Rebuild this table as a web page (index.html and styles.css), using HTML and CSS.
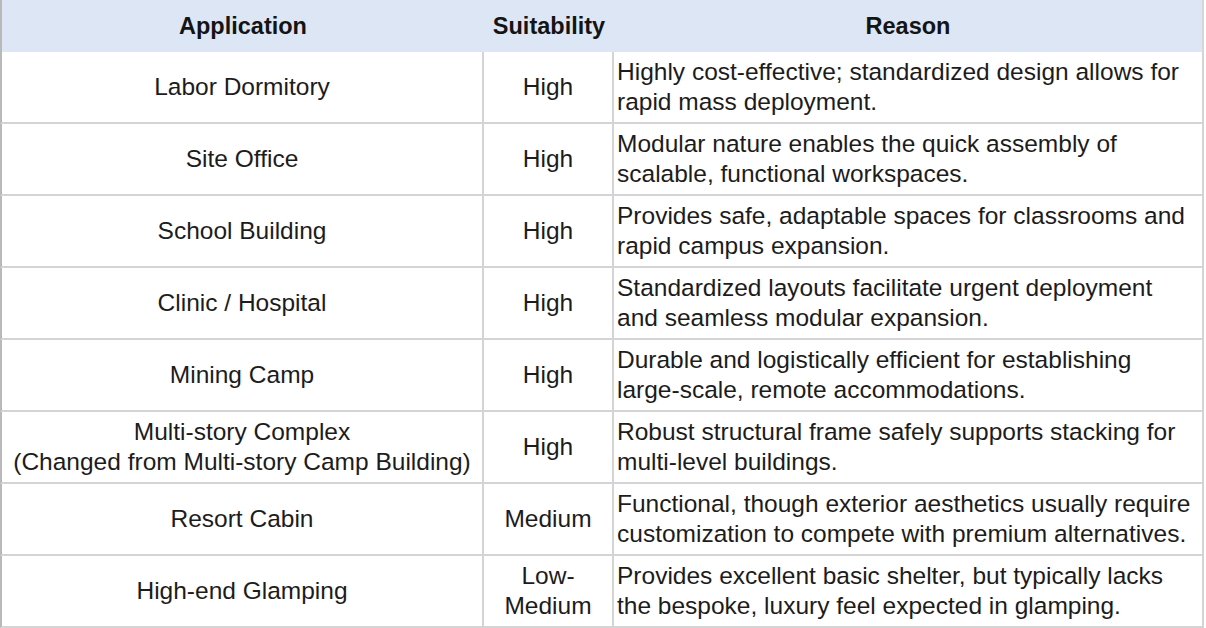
FILE: index.html
```html
<!DOCTYPE html>
<html lang="en">
<head>
<meta charset="utf-8">
<title>Applications</title>
<link rel="stylesheet" href="styles.css">
</head>
<body>
<table class="suit-table">
  <colgroup>
    <col class="col-app">
    <col class="col-suit">
    <col class="col-reason">
  </colgroup>
  <thead>
    <tr>
      <th class="h-app">Application</th>
      <th class="h-suit">Suitability</th>
      <th class="h-reason">Reason</th>
    </tr>
  </thead>
  <tbody>
    <tr>
      <td class="c-app">Labor Dormitory</td>
      <td class="c-suit">High</td>
      <td class="c-reason">Highly cost-effective; standardized design allows for<br>rapid mass deployment.</td>
    </tr>
    <tr>
      <td class="c-app">Site Office</td>
      <td class="c-suit">High</td>
      <td class="c-reason">Modular nature enables the quick assembly of<br>scalable, functional workspaces.</td>
    </tr>
    <tr>
      <td class="c-app">School Building</td>
      <td class="c-suit">High</td>
      <td class="c-reason">Provides safe, adaptable spaces for classrooms and<br>rapid campus expansion.</td>
    </tr>
    <tr>
      <td class="c-app">Clinic / Hospital</td>
      <td class="c-suit">High</td>
      <td class="c-reason">Standardized layouts facilitate urgent deployment<br>and seamless modular expansion.</td>
    </tr>
    <tr>
      <td class="c-app">Mining Camp</td>
      <td class="c-suit">High</td>
      <td class="c-reason">Durable and logistically efficient for establishing<br>large-scale, remote accommodations.</td>
    </tr>
    <tr>
      <td class="c-app">Multi-story Complex<br>(Changed from Multi-story Camp Building)</td>
      <td class="c-suit">High</td>
      <td class="c-reason">Robust structural frame safely supports stacking for<br>multi-level buildings.</td>
    </tr>
    <tr>
      <td class="c-app">Resort Cabin</td>
      <td class="c-suit">Medium</td>
      <td class="c-reason">Functional, though exterior aesthetics usually require<br>customization to compete with premium alternatives.</td>
    </tr>
    <tr>
      <td class="c-app">High-end Glamping</td>
      <td class="c-suit">Low-<br>Medium</td>
      <td class="c-reason">Provides excellent basic shelter, but typically lacks<br>the bespoke, luxury feel expected in glamping.</td>
    </tr>
  </tbody>
</table>
</body>
</html>
```
FILE: styles.css
```css
html, body {
  margin: 0;
  padding: 0;
  background: #ffffff;
}

body {
  font-family: "Liberation Sans", Arial, Helvetica, sans-serif;
  color: #1c1c1c;
}

.suit-table {
  border-collapse: separate;
  border-spacing: 0;
  table-layout: fixed;
  width: 1204px;
}

.col-app { width: 484px; }
.col-suit { width: 130px; }
.col-reason { width: 590px; }

.suit-table th {
  background: #dce6f4;
  height: 52px;
  padding: 0;
  font-size: 23.5px;
  font-weight: bold;
  color: #141414;
  text-align: center;
  vertical-align: middle;
}

.suit-table th.h-app {
  border-left: 2px solid #b9b9b9;
}

.suit-table th.h-reason {
  border-right: 2px solid #d6d6d6;
}

.suit-table td {
  height: 70px;
  padding: 0;
  font-size: 24.5px;
  line-height: 30px;
  vertical-align: middle;
  border-right: 2px solid #d4d4d4;
  border-bottom: 2px solid #d4d4d4;
}

.suit-table td.c-app {
  border-left: 2px solid #b9b9b9;
  text-align: center;
}

.suit-table td.c-suit {
  text-align: center;
}

.suit-table td.c-reason {
  text-align: left;
  padding-left: 3px;
}
```
